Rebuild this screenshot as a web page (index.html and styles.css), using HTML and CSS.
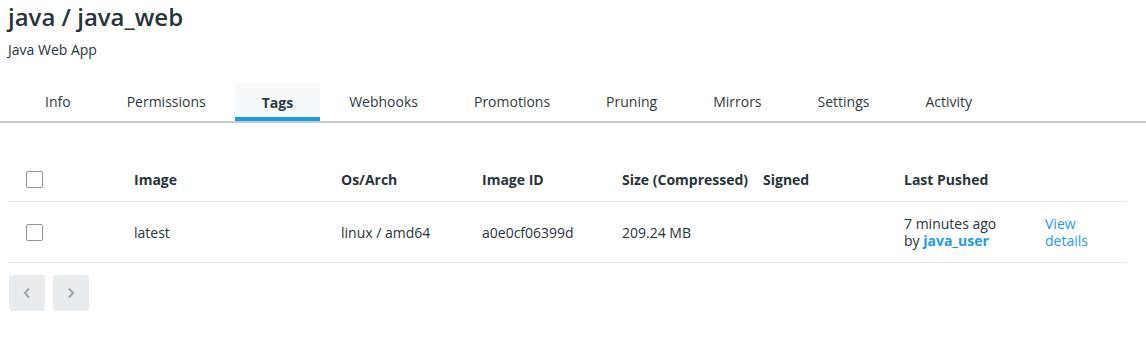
FILE: index.html
```html
<!DOCTYPE html>
<html lang="en">
<head>
    <meta charset="UTF-8">
    <title>java / java_web - Tags</title>
    <link rel="stylesheet" href="styles.css">
</head>
<body>
    <div class="repo-header">
        <h1 class="repo-title">java / java_web</h1>
        <div class="repo-desc">Java Web App</div>
    </div>

    <nav class="tabs">
        <a class="tab">Info</a>
        <a class="tab">Permissions</a>
        <a class="tab active">Tags</a>
        <a class="tab">Webhooks</a>
        <a class="tab">Promotions</a>
        <a class="tab">Pruning</a>
        <a class="tab">Mirrors</a>
        <a class="tab">Settings</a>
        <a class="tab">Activity</a>
    </nav>

    <table class="tags-table">
        <thead>
            <tr>
                <th class="col-check"><span class="checkbox"></span></th>
                <th class="col-image">Image</th>
                <th class="col-os">Os/Arch</th>
                <th class="col-id">Image ID</th>
                <th class="col-size">Size (Compressed)</th>
                <th class="col-signed">Signed</th>
                <th class="col-pushed">Last Pushed</th>
                <th class="col-action"></th>
            </tr>
        </thead>
        <tbody>
            <tr>
                <td class="col-check"><span class="checkbox"></span></td>
                <td>latest</td>
                <td>linux / amd64</td>
                <td>a0e0cf06399d</td>
                <td>209.24 MB</td>
                <td></td>
                <td>7 minutes ago<br>by <a class="link strong">java_user</a></td>
                <td><a class="link">View<br>details</a></td>
            </tr>
        </tbody>
    </table>

    <div class="pager">
        <button class="page-btn">
            <svg width="10" height="12" viewBox="0 0 10 12"><path d="M7 1.5 L3 6 L7 10.5" fill="none" stroke="#9eabb2" stroke-width="2.2"/></svg>
        </button>
        <button class="page-btn">
            <svg width="10" height="12" viewBox="0 0 10 12"><path d="M3 1.5 L7 6 L3 10.5" fill="none" stroke="#9eabb2" stroke-width="2.2"/></svg>
        </button>
    </div>
</body>
</html>
```

FILE: styles.css
```css
body {
    margin: 0;
    padding: 0;
    font-family: "Open Sans", Arial, sans-serif;
    color: #28343b;
    background-color: #fff;
}

.repo-header {
    padding: 0 8px;
}

.repo-title {
    margin: 0;
    font-size: 24px;
    font-weight: 600;
    line-height: 34px;
}

.repo-desc {
    margin-top: 6px;
    font-size: 14px;
    line-height: 20px;
}

.tabs {
    display: flex;
    gap: 2px;
    margin-top: 23px;
    padding-left: 18px;
    border-bottom: 2px solid #c3cdd0;
}

.tab {
    padding: 0 27px;
    height: 38px;
    line-height: 38px;
    font-size: 14px;
    color: #2f3b42;
    box-sizing: border-box;
}

.tab.active {
    font-weight: 700;
    background-color: #f5f9fc;
    border-bottom: 4px solid #1e9aeb;
    line-height: 36px;
    padding-top: 2px;
}

.tags-table {
    margin: 35px 0 0 8px;
    width: 1119px;
    border-collapse: collapse;
    font-size: 14px;
    text-align: left;
}

.tags-table th {
    font-weight: 700;
    height: 43px;
    vertical-align: middle;
    padding: 0;
    border-bottom: 1px solid #e1e5e7;
}

.tags-table td {
    height: 60px;
    padding: 0;
    line-height: 17px;
    vertical-align: middle;
    border-bottom: 1px solid #e1e5e7;
}

.col-check { width: 108px; padding-left: 18px !important; }
.col-image { width: 207px; }
.col-os { width: 141px; }
.col-id { width: 140px; }
.col-size { width: 141px; }
.col-signed { width: 141px; }
.col-pushed { width: 141px; }

.checkbox {
    display: block;
    width: 15px;
    height: 15px;
    border: 1px solid #8d989e;
    border-radius: 2px;
}

.link {
    color: #1e9aeb;
}

.link.strong {
    font-weight: 700;
}

.pager {
    display: flex;
    gap: 8px;
    margin: 12px 0 0 9px;
}

.page-btn {
    width: 36px;
    height: 36px;
    border: none;
    border-radius: 3px;
    background-color: #e9ecee;
    display: flex;
    align-items: center;
    justify-content: center;
    padding: 0;
}
```
